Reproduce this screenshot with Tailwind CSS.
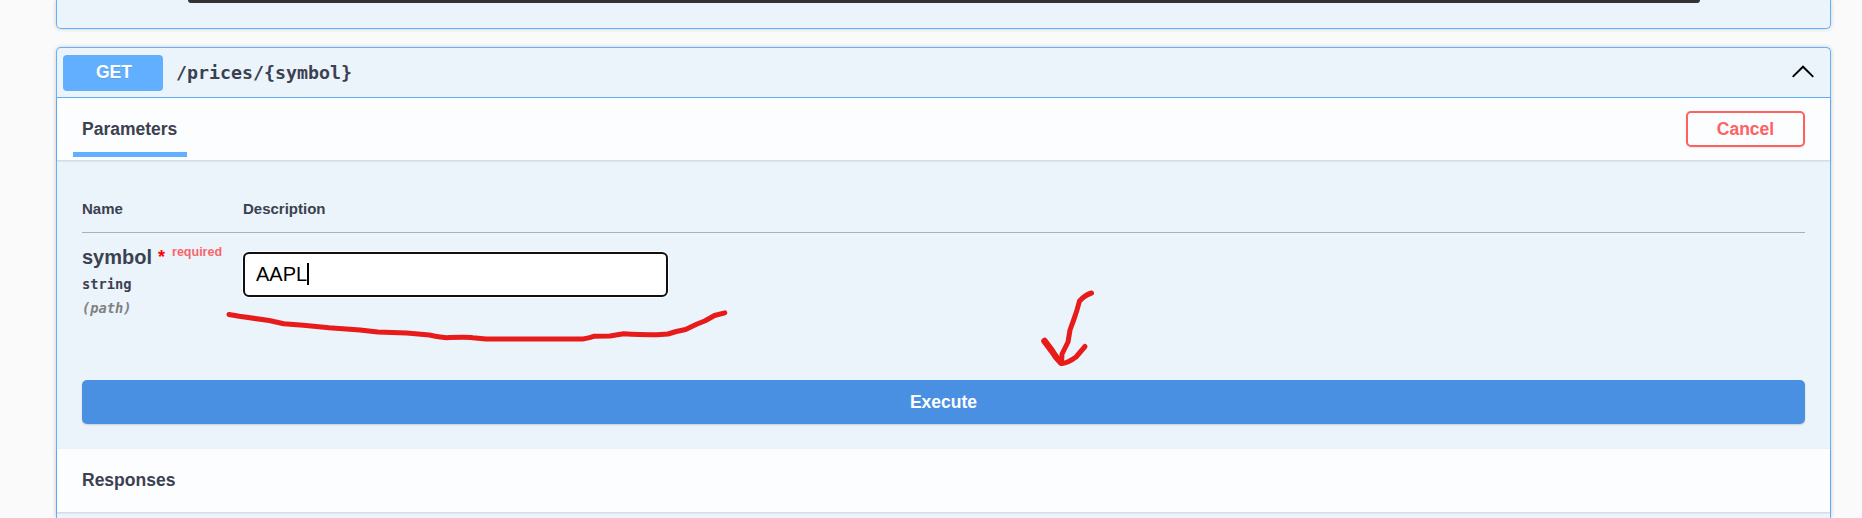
<!DOCTYPE html>
<html lang="en">
<head>
<meta charset="utf-8">
<title>API</title>
<script src="https://cdn.jsdelivr.net/npm/@tailwindcss/browser@4"></script>
</head>
<body class="relative h-[518px] overflow-hidden bg-[#fafafa] pl-14 pr-[31px] font-['Liberation_Sans',Arial,sans-serif] text-[#3b4151]">
  <section class="h-[29px] rounded-b-[5px] border border-t-0 border-[#61affe] bg-[#ebf3fb] pl-[131px] pr-[130px] shadow-[0_0_4px_rgba(0,0,0,0.19)]">
    <div class="h-[3px] rounded-b-[5px] bg-[#333]"></div>
  </section>

  <section class="mt-[18px] h-[471px] rounded-t-[5px] border border-b-0 border-[#61affe] bg-[#ebf3fb] shadow-[0_0_4px_rgba(0,0,0,0.19)]">
    <header class="flex h-[50px] items-center border-b border-[#61affe] pl-1.5 pr-4">
      <div class="h-9 w-[100px] rounded-[4px] bg-[#61affe] text-center text-[17.5px] leading-[34px] font-bold text-white [text-shadow:0_1px_0_rgba(0,0,0,0.1)]"><span class="pl-[2px]">GET</span></div>
      <div class="ml-[13px] grow font-['DejaVu_Sans_Mono',monospace] text-[18.27px] leading-6 font-bold">/prices/{symbol}</div>
      <svg class="-mt-[2px] h-[13px] w-[22px]" viewBox="0 0 22 13" fill="none" stroke="#000" stroke-width="1.9"><path d="M0.7 11.9 L11 1.7 L21.3 11.9"/></svg>
    </header>

    <div class="relative z-10 flex h-[62px] items-start justify-between bg-[#fcfdff] pr-[25px] shadow-[0_1px_2px_rgba(0,0,0,0.15)]">
      <div class="ml-4 h-[59px] w-[114px] border-b-5 border-[#61affe] pt-[21px] pl-[9px] text-[17.5px] leading-5 font-bold">Parameters</div>
      <button class="mt-[13px] h-9 w-[119px] rounded-[5px] border-2 border-[#ff6060] text-[17.5px] leading-[31px] font-bold text-[#ff6060] shadow-[0_1px_2px_rgba(0,0,0,0.1)]">Cancel</button>
    </div>

    <div class="h-[289px] px-[25px]">
      <div class="grid h-[73px] grid-cols-[161px_1fr] border-b border-[#a7b1be] pt-[39px] text-[15px] leading-5 font-bold">
        <div>Name</div><div>Description</div>
      </div>
      <div class="grid h-[147px] grid-cols-[161px_1fr] pt-[11px]">
        <div>
          <div class="flex h-6 items-start leading-6 font-bold"><span class="pt-px text-[20px]">symbol</span><span class="ml-[6px] pt-[1px] text-[18px] text-[#ff0000]">*</span><span class="ml-[7px] mt-[-4px] text-[12.5px] text-[#ff0000]/60">required</span></div>
          <div class="mt-[6px] font-['DejaVu_Sans_Mono',monospace] text-[13.7px] leading-5 font-bold">string</div>
          <div class="mt-1 font-['DejaVu_Sans_Mono',monospace] text-[13.7px] leading-5 font-bold text-[#808080] italic">(path)</div>
        </div>
        <div class="mt-2 flex h-[45px] w-[425px] items-center rounded-[6px] border-2 border-[#101010] bg-white pl-[11px] text-[20px] text-black shadow-[0_0_0_1px_#fff]">
          <span class="-mt-[2px]">AAPL</span><span class="-mt-px h-[22px] w-[2px] bg-black"></span>
        </div>
      </div>
      <button class="block h-11 w-full rounded-[5px] bg-[#4990e2] text-[17.5px] leading-[43px] font-bold text-white shadow-[0_1px_2px_rgba(0,0,0,0.15)]">Execute</button>
    </div>

    <div class="h-[63px] bg-[#fcfdff] pt-[21px] pl-[25px] text-[17.5px] leading-5 font-bold shadow-[0_1px_2px_rgba(0,0,0,0.15)]">Responses</div>
  </section>

  <!-- Hand-drawn annotations over the form -->
  <svg class="pointer-events-none absolute inset-0 z-20" width="1862" height="518" viewBox="0 0 1862 518" fill="none" stroke="#e81b1b" stroke-width="5" stroke-linecap="round" stroke-linejoin="round">
    <path d="M229 314.5 L239.3 316.3 L269.2 320.5 L283.7 323.7 L303.3 325.3 L329 327.8 L360 330 L377.7 332 L406.6 333 L429.4 335 Q443.8 338 449 337.6 Q468.6 337 472.7 337.8 L486 339 L580 339 Q585.3 339 593.6 336.3 L610 336 L623.6 333.8 Q654.6 335.5 668 334 L676.3 331.5 L685.6 329.5 L696 324.5 L705.2 320.7 L714.5 315.5 L724.8 312.8"/>
    <path d="M1091.5 293 Q1085 295 1079.5 301 Q1077 311 1074 319 L1070 330 L1068 342 L1062 354 L1061.5 363"/>
    <path d="M1062 363.5 Q1068 363 1076 357 L1085 346.5"/>
    <path d="M1044.5 341 L1052 351 Q1056 358 1061 362.5" stroke-width="6.5"/>
  </svg>
</body>
</html>
